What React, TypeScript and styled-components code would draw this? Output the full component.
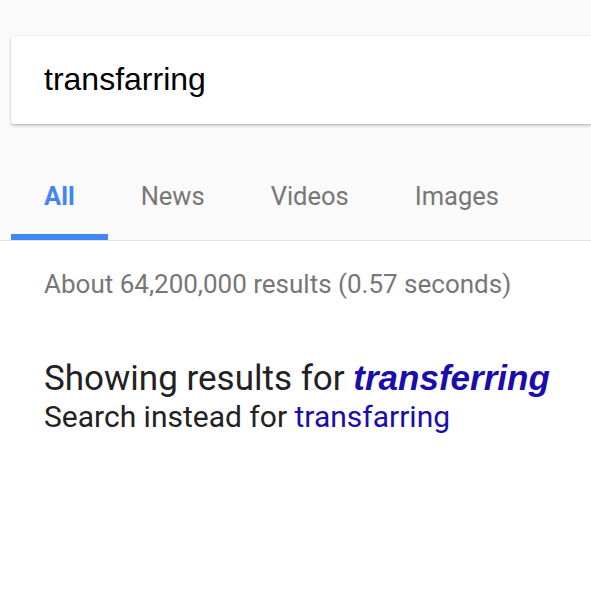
import { createGlobalStyle, styled } from 'styled-components';

const GlobalStyle = createGlobalStyle`
  html, body {
    margin: 0;
    padding: 0;
    background: #ffffff;
  }
  body {
    font-family: Roboto, "Liberation Sans", Arial, sans-serif;
    overflow: hidden;
  }
`;

const tabs = ['All', 'News', 'Videos', 'Images'];

export default function App() {
  return (
    <>
      <GlobalStyle />
      <Header>
        <SearchBox>
          <Query>transfarring</Query>
        </SearchBox>
        <TabBar>
          {tabs.map((t, i) => (
            <Tab key={t} $active={i === 0}>
              {t}
            </Tab>
          ))}
        </TabBar>
      </Header>
      <Results>
        <Stats>About 64,200,000 results (0.57 seconds)</Stats>
        <Correction>
          Showing results for <Corrected>transferring</Corrected>
        </Correction>
        <Instead>
          Search instead for <OrigLink>transfarring</OrigLink>
        </Instead>
      </Results>
    </>
  );
}

const Header = styled.div`
  background: #fafafa;
  padding-top: 36px;
  border-bottom: 1px solid #e4e4e4;
`;

const SearchBox = styled.div`
  margin-left: 11px;
  height: 88px;
  background: #fff;
  border-radius: 3px 0 0 3px;
  box-shadow: 0 2px 3px rgba(0, 0, 0, 0.2), 0 0 0 1px rgba(0, 0, 0, 0.04);
  display: flex;
  align-items: center;
  padding-left: 33px;
`;

const Query = styled.span`
  font-family: "Liberation Sans", Arial, sans-serif;
  font-size: 32px;
  color: #000;
  margin-top: -2px;
`;

const TabBar = styled.div`
  display: flex;
  padding-left: 11px;
  margin-top: 57px;
`;

const Tab = styled.div<{ $active: boolean }>`
  font-size: 25.5px;
  font-weight: ${(p) => (p.$active ? 700 : 400)};
  color: ${(p) => (p.$active ? '#4285f4' : '#777')};
  padding: 0 33px 23px;
  border-bottom: 6px solid ${(p) => (p.$active ? '#4285f4' : 'transparent')};
  line-height: 30px;
`;

const Results = styled.div`
  padding: 28px 44px 0;
`;

const Stats = styled.div`
  font-size: 26px;
  color: #777;
  line-height: 30px;
`;

const Correction = styled.div`
  margin-top: 59px;
  font-size: 35px;
  color: #222;
  line-height: 40px;
  white-space: nowrap;
`;

const Corrected = styled.a`
  font-family: "Liberation Sans", Arial, sans-serif;
  font-weight: 700;
  font-style: italic;
  color: #1a0dab;
`;

const Instead = styled.div`
  font-size: 30px;
  color: #222;
  line-height: 36px;
`;

const OrigLink = styled.a`
  color: #1a0dab;
`;
